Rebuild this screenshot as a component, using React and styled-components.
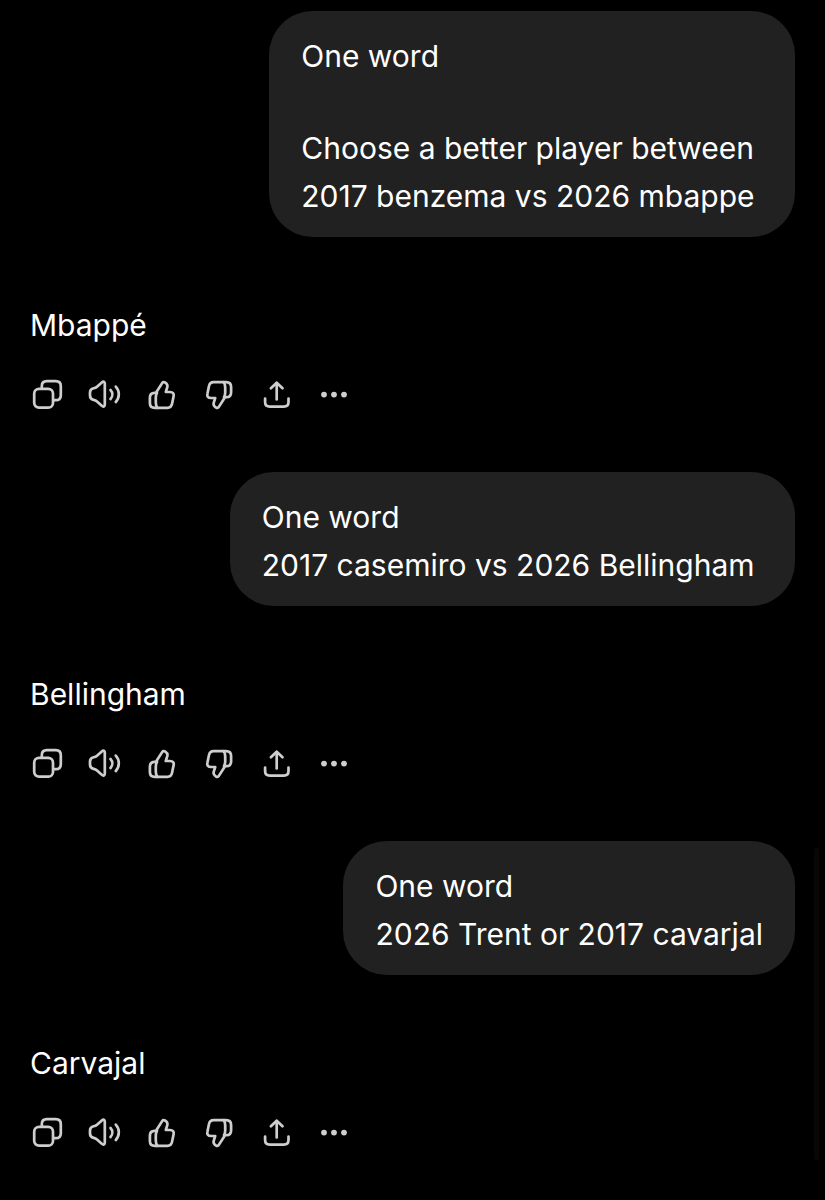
import styled, { createGlobalStyle } from 'styled-components';

const GlobalStyle = createGlobalStyle`
  *,
  *::before,
  *::after {
    box-sizing: border-box;
  }

  body {
    margin: 0;
    background: #000;
    color: #fff;
    font-family: Inter, 'Liberation Sans', sans-serif;
    font-size: 30px;
    line-height: 48px;
  }
`;

const Thread = styled.main`
  display: flex;
  flex-direction: column;
  gap: 53px;
  padding: 11px 30px 50px;
`;

const Turn = styled.section`
  display: flex;
  flex-direction: column;
  gap: 64px;
`;

const Bubble = styled.div`
  display: flex;
  flex-direction: column;
  gap: 44px;
  align-self: flex-end;
  max-width: 80%;
  padding: 21px 32px 17px;
  border-radius: 44px;
  background: #212121;
`;

// break-spaces keeps whatever the user typed, trailing blanks included
const Paragraph = styled.p`
  margin: 0;
  white-space: break-spaces;
`;

const Reply = styled.article`
  display: flex;
  flex-direction: column;
  gap: 22px;
`;

const Actions = styled.div`
  display: flex;
  gap: 23px;
  padding: 7px 1px;
`;

const IconButton = styled.button`
  width: 34px;
  height: 34px;
  padding: 0;
  border: 0;
  background: none;
  color: #cecece;
  cursor: pointer;
`;

const Icon = styled.svg`
  display: block;
  width: 34px;
  height: 34px;
  fill: none;
  stroke: currentColor;
  stroke-width: 2.7;
  stroke-linecap: round;
  stroke-linejoin: round;
`;

const ScrollThumb = styled.div`
  position: fixed;
  right: 6px;
  bottom: 40px;
  width: 5px;
  height: 26vh;
  border-radius: 3px;
  background: #070707;
`;

const thumb = (
  <>
    <path d="M11 14.8 L17.3 4.9 C18 3.8 19 3.9 20.3 4.7 C22.2 5.9 22.8 7.3 22.3 9.2 L20.8 14 H25 C27.9 14 29.2 15.6 28.6 18.2 L27 26.1 C26.4 28.8 25 29.9 22.4 29.9 H9.8 C6.5 29.9 4.9 28.3 4.9 25 V19.8 C4.9 16.5 6.4 14.8 9.6 14.8 Z" />
    <path d="M12 14.8 C11.2 16.2 10.8 17.6 10.8 19.6 V24.6 C10.8 27 11.3 28.5 12.4 29.8" />
  </>
);

const actions = [
  {
    label: 'Copy',
    icon: (
      <>
        <rect x="3.2" y="10.9" width="18.8" height="18.8" rx="4.8" />
        <path d="M10.8 10.4 V8.2 C10.8 5 12.6 3.2 15.8 3.2 H24.8 C28 3.2 29.8 5 29.8 8.2 V17.2 C29.8 20.4 28 22.2 24.8 22.2 H22.4" />
      </>
    ),
  },
  {
    label: 'Read aloud',
    icon: (
      <>
        <path d="M5.6 10.3 C7 10 8 9.6 9 8.7 L13.8 4.4 C15.4 3 16.8 3.6 16.8 5.6 V26.6 C16.8 28.6 15.4 29.2 13.8 27.8 L9 23.5 C8 22.6 7 22.2 5.6 21.9 C3.2 21.4 2 20 2 17.6 V14.6 C2 12.2 3.2 10.8 5.6 10.3 Z" />
        <path d="M22.5 12 C24.9 14.6 24.9 18.4 22.5 21" />
        <path d="M27.8 8.6 C31.8 13 31.8 19.6 27.8 24" />
      </>
    ),
  },
  { label: 'Good response', icon: thumb },
  { label: 'Bad response', icon: <g transform="rotate(180 17 17)">{thumb}</g> },
  {
    label: 'Share',
    icon: (
      <>
        <path d="M17.7 21.4 V5" />
        <path d="M11.9 10.3 L17.7 4.7 L23.5 10.3" />
        <path d="M6.1 20.6 V24 C6.1 27 7.8 28.6 10.8 28.6 H24.8 C27.8 28.6 29.5 27 29.5 24 V20.6" />
      </>
    ),
  },
  {
    label: 'More',
    icon: (
      <g fill="currentColor" stroke="none">
        <circle cx="8" cy="16.6" r="2.9" />
        <circle cx="18" cy="16.6" r="2.9" />
        <circle cx="28" cy="16.6" r="2.9" />
      </g>
    ),
  },
];

const turns = [
  {
    prompt: [
      'One word',
      'Choose a better player between\n2017 benzema vs 2026 mbappe ',
    ],
    reply: 'Mbappé',
  },
  {
    prompt: ['One word\n2017 casemiro vs 2026 Bellingham '],
    reply: 'Bellingham',
  },
  {
    prompt: ['One word\n2026 Trent or 2017 cavarjal'],
    reply: 'Carvajal',
  },
];

const App = () => (
  <>
    <GlobalStyle />
    <Thread>
      {turns.map(({ prompt, reply }) => (
        <Turn key={reply}>
          <Bubble>
            {prompt.map((text) => (
              <Paragraph key={text}>{text}</Paragraph>
            ))}
          </Bubble>
          <Reply>
            <Paragraph>{reply}</Paragraph>
            <Actions>
              {actions.map(({ label, icon }) => (
                <IconButton key={label} type="button" aria-label={label}>
                  <Icon viewBox="0 0 34 34" aria-hidden="true">
                    {icon}
                  </Icon>
                </IconButton>
              ))}
            </Actions>
          </Reply>
        </Turn>
      ))}
    </Thread>
    <ScrollThumb />
  </>
);

export default App;
